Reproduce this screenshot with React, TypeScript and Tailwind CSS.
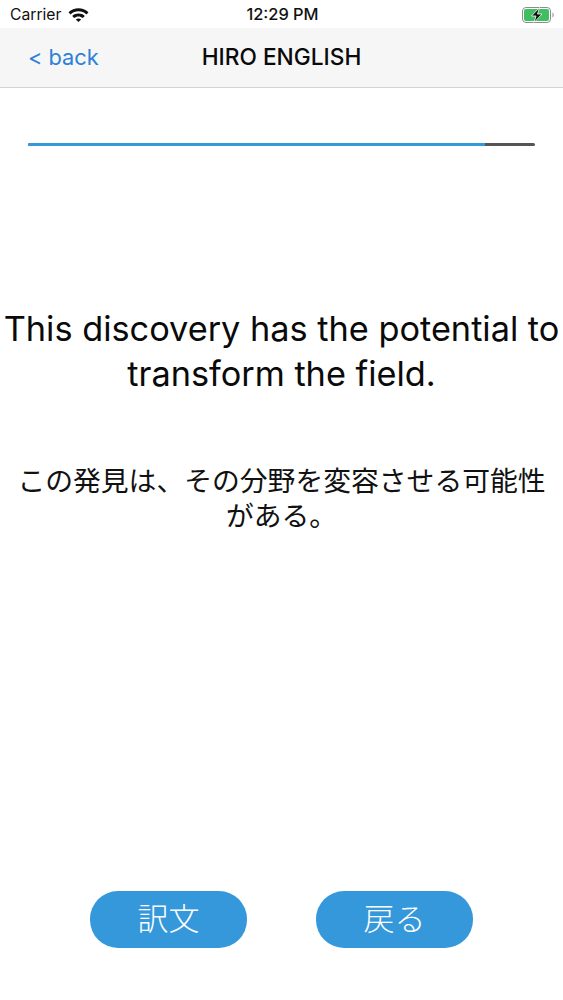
const sans = "font-['Inter','Liberation_Sans','Noto_Sans_CJK_JP',sans-serif]";

function WifiIcon() {
  return (
    <svg width="21" height="15" viewBox="0 0 21 15" className="ml-[7px]">
      <path d="M0.5 5.2 C6 0 15 0 20.5 5.2 L18.5 7.4 C14 3.2 7 3.2 2.5 7.4 Z" fill="#111" />
      <path d="M4.2 9 C7.6 5.8 13.4 5.8 16.8 9 L14.8 11 C12.4 8.9 8.6 8.9 6.2 11 Z" fill="#111" />
      <path d="M7.8 12.4 C9.4 11.1 11.6 11.1 13.2 12.4 L10.5 15 Z" fill="#111" />
    </svg>
  );
}

function BatteryIcon() {
  return (
    <svg width="33" height="16" viewBox="0 0 33 16">
      <rect x="0.5" y="0.5" width="28" height="15" rx="3.5" fill="none" stroke="#8a8f8c" />
      <rect x="2" y="2" width="25" height="12" rx="2" fill="#3fbf62" />
      <path d="M30.5 5.5 C32 6 32 10 30.5 10.5 Z" fill="#8a8f8c" />
      <path d="M17.5 0.5 L9.5 9 L14 9 L12 15.5 L20 7 L15.5 7 Z" fill="#111" stroke="#fff" strokeWidth="0.8" />
    </svg>
  );
}

export default function App() {
  return (
    <div className={`flex h-[1000px] w-[563px] flex-col overflow-hidden bg-white ${sans}`}>
      <div className="grid h-7 shrink-0 grid-cols-3 items-center pl-[10px] pr-[8px] pt-[1px] text-[#111]">
        <div className="flex items-center text-[15.7px]">
          <span>Carrier</span>
          <WifiIcon />
        </div>
        <span className="text-center text-[16.4px] font-medium">12:29 PM</span>
        <div className="flex justify-end">
          <BatteryIcon />
        </div>
      </div>

      <div className="relative flex h-[60px] shrink-0 items-center justify-center border-b border-[#d4d4d6] bg-[#f6f6f7]">
        <span className="absolute left-[28px] top-[12px] text-[21.8px] leading-[34px] text-[#2f80d8]">&lt; back</span>
        <span className="text-[22.7px] font-medium text-[#0a0a0a]">HIRO ENGLISH</span>
      </div>

      <div className="mx-[28px] mt-[55px] flex h-[3px] shrink-0 overflow-hidden rounded-full bg-[#555]">
        <div className="h-full w-[457px] bg-[#3498db]" />
      </div>

      <div className="mt-[160px] whitespace-nowrap text-center text-[34.3px] leading-[45px] text-[#0a0a0a]">
        This discovery has the potential to
        <br />
        transform the field.
      </div>

      <div className="mt-[68px] px-[14px] text-center text-[27.8px] leading-[35px] text-[#111]">
        この発見は、その分野を変容させる可能性がある。
      </div>

      <div className="mt-auto mb-[52px] flex justify-center gap-[69px]">
        <button className="h-[57px] w-[157px] rounded-[28px] bg-[#3498db] text-[31px] font-light text-white">訳文</button>
        <button className="h-[57px] w-[157px] rounded-[28px] bg-[#3498db] text-[31px] font-light text-white">戻る</button>
      </div>
    </div>
  );
}
